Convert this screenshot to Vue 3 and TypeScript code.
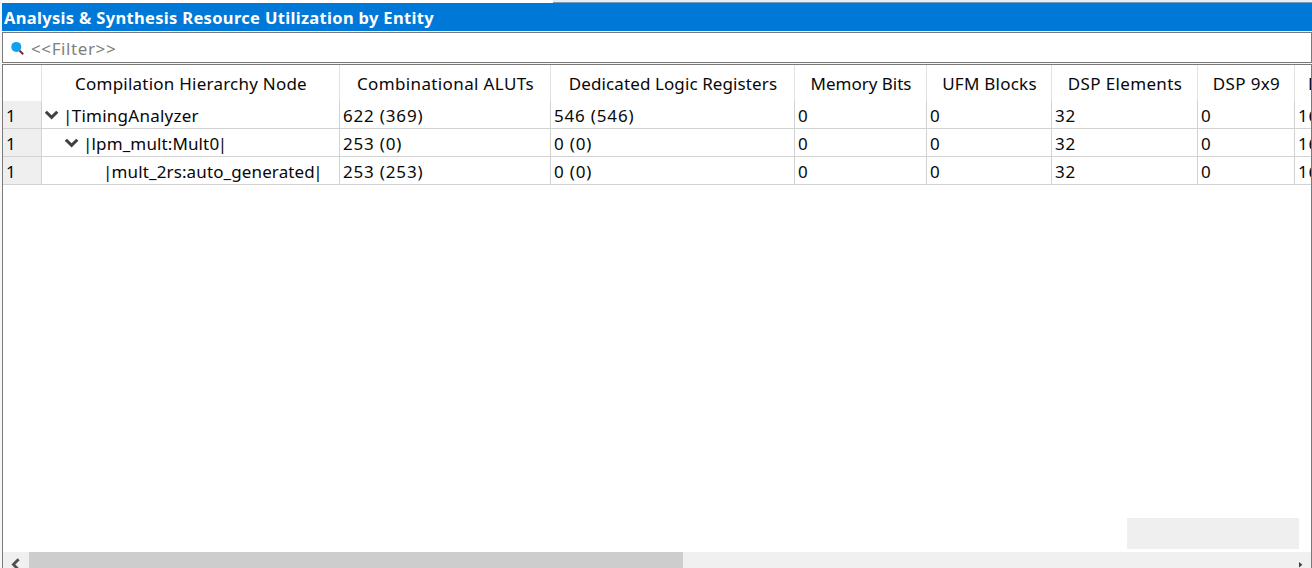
<script setup lang="ts">
interface Column { title: string; key: string }
interface Entity { depth: number; open: boolean; name: string; closed: boolean; values: string[] }

const columns: Column[] = [
  { title: 'Compilation Hierarchy Node', key: 'hierarchy' },
  { title: 'Combinational ALUTs', key: 'aluts' },
  { title: 'Dedicated Logic Registers', key: 'regs' },
  { title: 'Memory Bits', key: 'mem' },
  { title: 'UFM Blocks', key: 'ufm' },
  { title: 'DSP Elements', key: 'dsp' },
  { title: 'DSP 9x9', key: 'dsp9' },
]

const entities: Entity[] = [
  { depth: 0, open: true, name: 'TimingAnalyzer', closed: false, values: ['622 (369)', '546 (546)', '0', '0', '32', '0', '16'] },
  { depth: 1, open: true, name: 'lpm_mult:Mult0', closed: true, values: ['253 (0)', '0 (0)', '0', '0', '32', '0', '16'] },
  { depth: 2, open: false, name: 'mult_2rs:auto_generated', closed: true, values: ['253 (253)', '0 (0)', '0', '0', '32', '0', '16'] },
]
</script>

<template>
  <div class="panel">
    <div class="top-edge"><div class="tab"></div></div>
    <div class="title"><span>Analysis &amp; Synthesis Resource Utilization by Entity</span></div>
    <div class="filter">
      <svg class="lens" width="14" height="14" viewBox="0 0 14 14">
        <path d="M8.6 8.8 L13.2 13.2" stroke="#7b2a33" stroke-width="2" />
        <circle cx="6.3" cy="5.9" r="5" fill="#12a2ec" />
      </svg>
      <span class="hint">&lt;&lt;Filter&gt;&gt;</span>
    </div>
    <div class="table">
      <div class="row head">
        <div class="cell index"></div>
        <div v-for="c in columns" :key="c.key" class="cell"><span :class="['label', c.key]">{{ c.title }}</span></div>
        <div class="cell last"><span class="label">DSP</span></div>
      </div>
      <div v-for="e in entities" :key="e.name" class="row">
        <div class="cell index">1</div>
        <div :class="['cell', 'node', 'depth' + e.depth]">
          <svg v-if="e.open" class="chevron" width="14" height="10" viewBox="0 0 14 10">
            <path d="M0.9 1.7 L6.6 7.3 L12.3 1.7" fill="none" stroke="#404040" stroke-width="3" />
          </svg>
          <span class="name"><span class="bar">|</span>{{ e.name }}<span v-if="e.closed" class="bar end">|</span></span>
        </div>
        <div v-for="(v, i) in e.values" :key="i" :class="['cell', 'value', { last: i === 6 }]">{{ v }}</div>
      </div>
      <div class="body"><div class="block"></div></div>
      <div class="scrollbar">
        <div class="arrow">
          <svg width="26" height="16" viewBox="0 0 26 16"><path d="M15.6 7.2 L10.4 12.5 L15.6 17.8" fill="none" stroke="#505050" stroke-width="2.8" /></svg>
        </div>
        <div class="thumb"></div>
        <svg class="right" width="12" height="16" viewBox="0 0 12 16"><path d="M0 10 L3.4 12.7 L0 15.4 Z" fill="#404040" /></svg>
      </div>
    </div>
  </div>
</template>

<style>
body { background: #fff; overflow: hidden; }
</style>

<style scoped>
.panel {
  box-sizing: border-box;
  width: 1312px;
  height: 568px;
  padding-left: 2px;
  display: flex;
  flex-direction: column;
  overflow: hidden;
  background: #f7f7f7;
  color: #080808;
  font: 17px/28px "Noto Sans", sans-serif;
  white-space: nowrap;
}
.top-edge { height: 3px; flex: none; background: #fff; }
.tab { box-sizing: border-box; height: 3px; margin-left: 551px; background: #e4eef8; border-bottom: 1px solid #7b98b5; }
.title {
  height: 28px;
  flex: none;
  padding-left: 2px;
  background: #0078d7;
  color: #fff;
  font-weight: 700;
  font-size: 16.5px;
  letter-spacing: 0.32px;
  line-height: 29px;
}
.filter {
  box-sizing: border-box;
  height: 31px;
  flex: none;
  margin-top: 1px;
  padding-left: 7px;
  display: flex;
  align-items: center;
  gap: 7px;
  border: 1px solid #7a7a7a;
  background: #fff;
  color: #808080;
}
.hint { letter-spacing: 0.6px; padding-top: 2px; }
.table {
  flex: 1;
  min-height: 0;
  margin-top: 1px;
  display: flex;
  flex-direction: column;
  border: solid #7a7a7a;
  border-width: 1px 1px 0;
  background: #fff;
}
.row {
  flex: none;
  height: 28px;
  display: grid;
  grid-template-columns: 39px 298px 211px 244px 132px 125px 146px 97px 16px;
}
.cell {
  box-sizing: border-box;
  min-width: 0;
  padding-left: 3px;
  border: solid #d2d2d2;
  border-width: 0 1px 1px 0;
  overflow: hidden;
  line-height: 30px;
}
.value { letter-spacing: 0.82px; }
.cell.last { border-right: 0; }
.index { background: #efefef; }
.head { height: 36px; }
.head .cell { padding: 0 0 0 1px; border-bottom: 0; border-color: #e2e2e2; line-height: 38px; display: flex; justify-content: center; }
.head .index { background: #fff; }
.head .cell.last { justify-content: flex-start; padding-left: 13px; }
.hierarchy { letter-spacing: 0.23px; }
.aluts { letter-spacing: 0.37px; }
.regs { letter-spacing: 0.1px; }
.ufm { letter-spacing: 0.25px; }
.dsp { letter-spacing: 0.35px; }
.dsp9 { letter-spacing: 0.35px; }
.node { display: flex; align-items: center; }
.depth1 { padding-left: 23px; }
.depth2 { padding-left: 61px; }
.chevron { flex: none; margin-right: 4px; }
.name { letter-spacing: 0.12px; padding-top: 2px; }
.depth0 .name { letter-spacing: 0.25px; }
.bar { margin-right: -0.9px; }
.bar.end { margin-left: -1.5px; }
.body { flex: 1; display: flex; justify-content: flex-end; align-items: flex-end; padding: 0 12px 3px 0; }
.block { width: 172px; height: 31px; background: #efefef; }
.scrollbar { flex: none; height: 16px; display: flex; background: #f0f0f0; overflow: hidden; }
.arrow { width: 26px; }
.arrow svg { display: block; }
.thumb { width: 654px; background: #cdcdcd; }
.right { margin-left: auto; }
</style>
